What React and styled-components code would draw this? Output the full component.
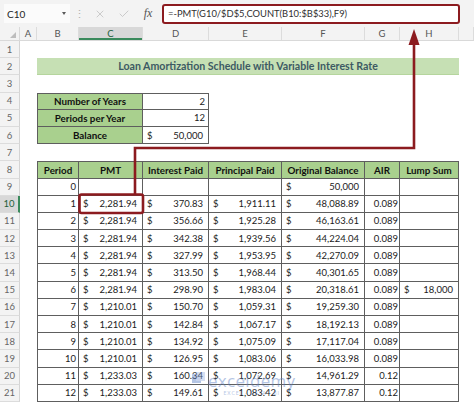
import React from 'react';
import styled, { createGlobalStyle } from 'styled-components';
import { X, Check } from 'lucide-react';

const COLS = '20px 17px 42px 64px 66px 73px 83px 35px 59px 1fr';
const ROW_H = 17.2;
const RED = '#8c1b1f';
const LINE = '#5e5e5e';
const HEAD_GREEN = '#a9d08e';
const TITLE_GREEN = '#c6e0b4';

const GlobalStyle = createGlobalStyle`
  html, body {
    margin: 0;
    background: #ffffff;
  }
  body {
    font-family: Lato, "Liberation Sans", sans-serif;
    overflow: hidden;
  }
`;

const Page = styled.div`
  position: relative;
  width: 474px;
  height: 402px;
  overflow: hidden;
  background: #ffffff;
`;

/* ---------- formula bar ---------- */

const FormulaBar = styled.div`
  display: flex;
  align-items: center;
  height: 27px;
  padding: 0 14px 0 4px;
  background: #f3f3f3;
  box-sizing: border-box;
`;

const NameBox = styled.div`
  display: flex;
  align-items: center;
  justify-content: space-between;
  width: 66px;
  height: 19px;
  padding: 0 4px 0 3px;
  box-sizing: border-box;
  background: #fbfbfb;
  font-size: 10px;
  color: #262626;
`;

const Caret = styled.span`
  width: 0;
  height: 0;
  border-left: 2.5px solid transparent;
  border-right: 2.5px solid transparent;
  border-top: 3px solid #5a5a5a;
`;

const BarSlot = styled.div`
  display: flex;
  align-items: center;
  justify-content: center;
  width: ${(p) => p.$w}px;
  color: ${(p) => p.$color || '#b5b5b5'};
  font-size: 11px;
`;

const Fx = styled.span`
  font-family: "Liberation Serif", serif;
  font-style: italic;
  font-size: 12px;
  color: #555;
`;

const FormulaBox = styled.div`
  flex: 1;
  display: flex;
  align-items: center;
  height: 20px;
  margin-left: 2px;
  padding-left: 4px;
  box-sizing: border-box;
  background: #ffffff;
  border: 2.5px solid ${RED};
  border-radius: 3px;
  font-size: 9.4px;
  color: #303030;
  white-space: nowrap;
`;

/* ---------- sheet grid ---------- */

const HeaderRow = styled.div`
  display: grid;
  grid-template-columns: ${COLS};
  height: 14px;
  background: #f3f3f3;
  border-bottom: 1px solid #d9d9d9;
  box-sizing: border-box;
`;

const Corner = styled.div`
  position: relative;
  border-right: 1px solid #d9d9d9;
  &::after {
    content: '';
    position: absolute;
    right: 3px;
    bottom: 2px;
    border-left: 6px solid transparent;
    border-bottom: 6px solid #bdbdbd;
  }
`;

const ColHead = styled.div`
  display: flex;
  align-items: center;
  justify-content: center;
  font-size: 9.5px;
  color: ${(p) => (p.$active ? '#1f5f3a' : '#555')};
  background: ${(p) => (p.$active ? '#d8d8d8' : 'transparent')};
  border-right: 1px solid #dcdcdc;
  box-shadow: ${(p) => (p.$active ? 'inset 0 -2px 0 #3a8a5c' : 'none')};
`;

const SheetRow = styled.div`
  display: grid;
  grid-template-columns: ${COLS};
  height: ${ROW_H}px;
`;

const RowHead = styled.div`
  display: flex;
  align-items: center;
  justify-content: center;
  font-size: 9.5px;
  color: ${(p) => (p.$active ? '#1f5f3a' : '#666')};
  background: ${(p) => (p.$active ? '#d8d8d8' : '#f3f3f3')};
  border-bottom: 1px solid #dcdcdc;
  border-right: ${(p) => (p.$active ? '2px solid #3a8a5c' : '1px solid #d4d4d4')};
  box-sizing: border-box;
`;

const Cell = styled.div`
  grid-column: ${(p) => p.$col};
  display: flex;
  align-items: center;
  justify-content: ${(p) => p.$justify || 'flex-end'};
  padding: 0 ${(p) => (p.$pad != null ? p.$pad : 3)}px 0 4px;
  box-sizing: border-box;
  background: ${(p) => p.$fill || '#ffffff'};
  font-size: 9.5px;
  color: #1b1b1b;
  white-space: nowrap;
  overflow: hidden;
  border-right: 1px solid ${LINE};
  border-bottom: 1px solid ${LINE};
  border-left: ${(p) => (p.$first ? `1px solid ${LINE}` : 'none')};
  border-top: ${(p) => (p.$top ? `1px solid ${LINE}` : 'none')};
`;

const HeadCell = styled(Cell)`
  justify-content: center;
  padding: 0 2px;
  background: ${HEAD_GREEN};
  font-weight: 700;
  font-size: 9.8px;
  color: #111;
`;

const TitleCell = styled.div`
  grid-column: 3 / 10;
  display: flex;
  align-items: center;
  justify-content: center;
  background: ${TITLE_GREEN};
  border-bottom: 1px solid #b5d59d;
  font-weight: 700;
  font-size: 10.6px;
  color: #3d5a63;
`;

const Sign = styled.span``;

/* ---------- overlays ---------- */

const Annotation = styled.svg`
  position: absolute;
  left: 0;
  top: 0;
  pointer-events: none;
`;

const Watermark = styled.div`
  position: absolute;
  left: 192px;
  top: 372px;
  display: flex;
  align-items: flex-start;
  gap: 3px;
  opacity: 0.45;
  color: #5b7fc4;
  pointer-events: none;
`;

const WatermarkText = styled.div`
  display: flex;
  flex-direction: column;
  align-items: center;
  line-height: 1;
`;

const WatermarkName = styled.span`
  font-family: "Open Sans", sans-serif;
  font-size: 17px;
  letter-spacing: 0.3px;
`;

const WatermarkSub = styled.span`
  margin-top: 2px;
  font-size: 5px;
  letter-spacing: 1px;
`;

const schedule = [
  [1, '2,281.94', '370.83', '1,911.11', '48,088.89', '0.089', '18,000', false],
  [2, '2,281.94', '356.66', '1,925.28', '46,163.61', '0.089'],
  [3, '2,281.94', '342.38', '1,939.56', '44,224.04', '0.089'],
  [4, '2,281.94', '327.99', '1,953.95', '42,270.09', '0.089'],
  [5, '2,281.94', '313.50', '1,968.44', '40,301.65', '0.089'],
  [6, '2,281.94', '298.90', '1,983.04', '20,318.61', '0.089', '18,000'],
  [7, '1,210.01', '150.70', '1,059.31', '19,259.30', '0.089'],
  [8, '1,210.01', '142.84', '1,067.17', '18,192.13', '0.089'],
  [9, '1,210.01', '134.92', '1,075.09', '17,117.04', '0.089'],
  [10, '1,210.01', '126.95', '1,083.06', '16,033.98', '0.089'],
  [11, '1,233.03', '160.34', '1,072.69', '14,961.29', '0.12'],
  [12, '1,233.03', '149.61', '1,083.42', '13,877.87', '0.12'],
];

const columns = ['A', 'B', 'C', 'D', 'E', 'F', 'G', 'H', ''];

function Money({ col, value, first, top }) {
  return (
    <Cell $col={col} $justify="space-between" $pad={5} $first={first} $top={top}>
      <Sign>$</Sign>
      <span>{value}</span>
    </Cell>
  );
}

function Row({ n, active, children }) {
  return (
    <SheetRow>
      <RowHead $active={active}>{n}</RowHead>
      {children}
    </SheetRow>
  );
}

export default function App() {
  return (
    <Page>
      <GlobalStyle />

      <FormulaBar>
        <NameBox>
          C10
          <Caret />
        </NameBox>
        <BarSlot $w={18} $color="#b0b0b0">⋮</BarSlot>
        <BarSlot $w={24}>
          <X size={12} strokeWidth={1.3} />
        </BarSlot>
        <BarSlot $w={24}>
          <Check size={12} strokeWidth={1.3} />
        </BarSlot>
        <BarSlot $w={24}>
          <Fx>fx</Fx>
        </BarSlot>
        <FormulaBox>=-PMT(G10/$D$5,COUNT(B10:$B$33),F9)</FormulaBox>
      </FormulaBar>

      <HeaderRow>
        <Corner />
        {columns.map((c, i) => (
          <ColHead key={i} $active={c === 'C'}>
            {c}
          </ColHead>
        ))}
      </HeaderRow>

      <Row n={1} />
      <Row n={2}>
        <TitleCell>Loan Amortization Schedule with Variable Interest Rate</TitleCell>
      </Row>
      <Row n={3} />

      <Row n={4}>
        <HeadCell $col="3 / 5" $first $top>Number of Years</HeadCell>
        <Cell $col="5 / 6" $top>2</Cell>
      </Row>
      <Row n={5}>
        <HeadCell $col="3 / 5" $first>Periods per Year</HeadCell>
        <Cell $col="5 / 6">12</Cell>
      </Row>
      <Row n={6}>
        <HeadCell $col="3 / 5" $first>Balance</HeadCell>
        <Money col="5 / 6" value="50,000" />
      </Row>
      <Row n={7} />

      <Row n={8}>
        <HeadCell $col="3 / 4" $first $top>Period</HeadCell>
        <HeadCell $col="4 / 5" $top>PMT</HeadCell>
        <HeadCell $col="5 / 6" $top>Interest Paid</HeadCell>
        <HeadCell $col="6 / 7" $top>Principal Paid</HeadCell>
        <HeadCell $col="7 / 8" $top>Original Balance</HeadCell>
        <HeadCell $col="8 / 9" $top>AIR</HeadCell>
        <HeadCell $col="9 / 10" $top>Lump Sum</HeadCell>
      </Row>
      <Row n={9}>
        <Cell $col="3 / 4" $first $pad={2}>0</Cell>
        <Cell $col="4 / 5" />
        <Cell $col="5 / 6" />
        <Cell $col="6 / 7" />
        <Money col="7 / 8" value="50,000" />
        <Cell $col="8 / 9" />
        <Cell $col="9 / 10" />
      </Row>

      {schedule.map(([period, pmt, interest, principal, balance, air, lump]) => (
        <Row key={period} n={period + 9} active={period === 1}>
          <Cell $col="3 / 4" $first $pad={2}>{period}</Cell>
          <Money col="4 / 5" value={pmt} />
          <Money col="5 / 6" value={interest} />
          <Money col="6 / 7" value={principal} />
          <Money col="7 / 8" value={balance} />
          <Cell $col="8 / 9" $pad={1}>{air}</Cell>
          {period === 6 ? <Money col="9 / 10" value={lump} /> : <Cell $col="9 / 10" />}
        </Row>
      ))}

      <Annotation width="474" height="402" viewBox="0 0 474 402">
        <rect x="79.5" y="194.5" width="63.5" height="18.5" rx="2" fill="none" stroke={RED} strokeWidth="2.6" />
        <path d="M135 194 V148 H414 V42" fill="none" stroke={RED} strokeWidth="2.6" />
        <polygon points="414,29 408.5,45 419.5,45" fill={RED} />
      </Annotation>

      <Watermark>
        <svg width="13" height="13" viewBox="0 0 13 13">
          <rect x="0" y="2" width="9" height="9" fill="#5b7fc4" />
          <rect x="4" y="0" width="9" height="9" fill="#8fa9dc" opacity="0.8" />
        </svg>
        <WatermarkText>
          <WatermarkName>exceldemy</WatermarkName>
          <WatermarkSub>EXCEL · DATA · BI</WatermarkSub>
        </WatermarkText>
      </Watermark>
    </Page>
  );
}
